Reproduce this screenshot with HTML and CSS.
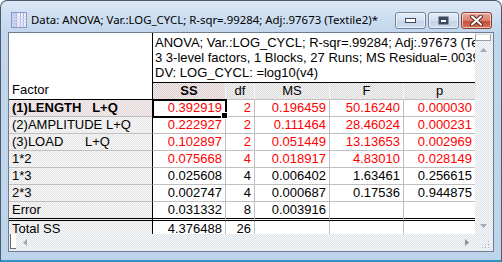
FILE: index.html
```html
<!DOCTYPE html>
<html lang="en">
<head>
    <meta charset="UTF-8">
    <title>Data: ANOVA</title>
    <link rel="stylesheet" href="styles.css">
</head>
<body>
    <div class="window">
        <!-- Title bar -->
        <div class="titlebar">
            <svg class="app-icon" width="16" height="16" viewBox="0 0 16 16">
                <rect x="0.5" y="0.5" width="15" height="15" fill="#eef1fb" stroke="#8e98c6"/>
                <rect x="1" y="1" width="4" height="14" fill="#c3cbec"/>
                <path d="M5.5 1v14M9.5 1v14M12.5 1v14" stroke="#a9b2dc"/>
                <path d="M1 4.5h14M1 7.5h14M1 10.5h14M1 13.5h14" stroke="#d2d7ef"/>
            </svg>
            <span class="title">Data: ANOVA; Var.:LOG_CYCL; R-sqr=.99284; Adj:.97673 (Textile2)*</span>
            <div class="caption-buttons">
                <button class="cap-btn">
                    <svg width="11" height="5" viewBox="0 0 11 5"><rect x="0.5" y="0.5" width="10" height="4" fill="#fff" stroke="#3b4a5e"/></svg>
                </button>
                <button class="cap-btn">
                    <svg width="11" height="9" viewBox="0 0 11 9"><rect x="0.5" y="0.5" width="10" height="8" fill="#3b4a5e"/><rect x="2.5" y="3.5" width="6" height="3" fill="#fff" stroke="#3b4a5e"/></svg>
                </button>
                <button class="cap-btn close">
                    <svg width="13" height="11" viewBox="0 0 13 11"><path d="M2 1.5l9 8M11 1.5l-9 8" stroke="#5a2a22" stroke-width="4" stroke-linecap="round"/><path d="M2 1.5l9 8M11 1.5l-9 8" stroke="#fff" stroke-width="2" stroke-linecap="round"/></svg>
                </button>
            </div>
        </div>

        <!-- Spreadsheet client area -->
        <div class="client">
            <div class="sheet-wrap">
                <table class="sheet">
                    <colgroup>
                        <col class="c-factor">
                        <col class="c-ss">
                        <col class="c-df">
                        <col class="c-ms">
                        <col class="c-f">
                        <col class="c-p">
                    </colgroup>
                    <tr class="note-row">
                        <td class="corner" rowspan="2">Factor</td>
                        <td class="note" colspan="5"><div>ANOVA; Var.:LOG_CYCL; R-sqr=.99284; Adj:.97673 (Textile2)</div><div>3 3-level factors, 1 Blocks, 27 Runs; MS Residual=.003916</div><div>DV: LOG_CYCL: =log10(v4)</div></td>
                    </tr>
                    <tr class="head-row">
                        <th class="sel">SS</th>
                        <th>df</th>
                        <th>MS</th>
                        <th>F</th>
                        <th>p</th>
                    </tr>
                    <tr class="hl">
                        <th class="rh sel">(1)LENGTH   L+Q</th>
                        <td class="active">0.392919</td><td>2</td><td>0.196459</td><td>50.16240</td><td>0.000030</td>
                    </tr>
                    <tr class="hl">
                        <th class="rh">(2)AMPLITUDE L+Q</th>
                        <td>0.222927</td><td>2</td><td>0.111464</td><td>28.46024</td><td>0.000231</td>
                    </tr>
                    <tr class="hl">
                        <th class="rh">(3)LOAD      L+Q</th>
                        <td>0.102897</td><td>2</td><td>0.051449</td><td>13.13653</td><td>0.002969</td>
                    </tr>
                    <tr class="hl">
                        <th class="rh">1*2</th>
                        <td>0.075668</td><td>4</td><td>0.018917</td><td>4.83010</td><td>0.028149</td>
                    </tr>
                    <tr>
                        <th class="rh">1*3</th>
                        <td>0.025608</td><td>4</td><td>0.006402</td><td>1.63461</td><td>0.256615</td>
                    </tr>
                    <tr>
                        <th class="rh">2*3</th>
                        <td>0.002747</td><td>4</td><td>0.000687</td><td>0.17536</td><td>0.944875</td>
                    </tr>
                    <tr class="error-row">
                        <th class="rh">Error</th>
                        <td>0.031332</td><td>8</td><td>0.003916</td><td></td><td></td>
                    </tr>
                    <tr>
                        <th class="rh">Total SS</th>
                        <td>4.376488</td><td>26</td><td></td><td></td><td></td>
                    </tr>
                </table>
            </div>

            <div class="vscroll">
                <div class="split-v"></div>
                <div class="arrow-btn">
                    <svg width="7" height="4" viewBox="0 0 7 4"><path d="M3.5 0L7 4H0z" fill="#a3a9b1"/></svg>
                </div>
                <div class="track"></div>
                <div class="arrow-btn">
                    <svg width="7" height="4" viewBox="0 0 7 4"><path d="M0 0h7L3.5 4z" fill="#a3a9b1"/></svg>
                </div>
            </div>

            <div class="hscroll">
                <div class="split-h"></div>
                <div class="arrow-btn">
                    <svg width="4" height="7" viewBox="0 0 4 7"><path d="M4 0v7L0 3.5z" fill="#a3a9b1"/></svg>
                </div>
                <div class="track"></div>
                <div class="arrow-btn">
                    <svg width="4" height="7" viewBox="0 0 4 7"><path d="M0 0l4 3.5L0 7z" fill="#8d939b"/></svg>
                </div>
            </div>

            <div class="grip">
                <svg width="8" height="8" viewBox="0 0 8 8">
                    <rect x="6" y="0" width="1" height="1" fill="#a0a6ae"/>
                    <rect x="3" y="3" width="1" height="1" fill="#a0a6ae"/>
                    <rect x="6" y="3" width="1" height="1" fill="#a0a6ae"/>
                    <rect x="0" y="6" width="1" height="1" fill="#a0a6ae"/>
                    <rect x="3" y="6" width="1" height="1" fill="#a0a6ae"/>
                    <rect x="6" y="6" width="1" height="1" fill="#a0a6ae"/>
                </svg>
            </div>
        </div>
    </div>
</body>
</html>
```

FILE: styles.css
```css
html, body {
    margin: 0;
    background: #fff;
}
.window {
    width: 502px;
    height: 262px;
    box-sizing: border-box;
    padding: 0 7px 8px 7px;
    border: 1px solid #4d5a6b;
    border-bottom: 2px solid #3592c0;
    border-radius: 7px 7px 0 0;
    background: linear-gradient(#dbe7f5, #c2d7ed 30px, #bed4ec);
    display: flex;
    flex-direction: column;
}
.titlebar {
    height: 31px;
    box-sizing: border-box;
    padding-top: 9px;
    display: flex;
    align-items: flex-start;
}
.app-icon {
    margin: 2px 4px 0 3px;
    flex: none;
}
.title {
    font-family: "Noto Sans", sans-serif;
    font-size: 11.4px;
    line-height: 19px;
    color: #000;
    white-space: nowrap;
    flex: 1;
}
.caption-buttons {
    display: flex;
    gap: 2px;
    margin-top: 2px;
    margin-right: 2px;
}
.cap-btn {
    width: 31px;
    height: 17px;
    padding: 0;
    border: 1px solid #72849b;
    border-radius: 3px;
    background: linear-gradient(#e3ecf7, #d3e0f0 50%, #c3d4e9 51%, #cfdcec);
    display: flex;
    align-items: center;
    justify-content: center;
    box-shadow: inset 0 0 0 1px rgba(255, 255, 255, 0.6);
}
.cap-btn.close {
    border-color: #8b3b2f;
    background: linear-gradient(#e9a898, #d9826f 50%, #c54d37 51%, #d2705a);
}

/* client area */
.client {
    width: 486px;
    height: 220px;
    box-sizing: border-box;
    border: 1px solid #6e7c8e;
    background: #fff;
    display: grid;
    grid-template-columns: 466px 18px;
    grid-template-rows: 201px 17px;
}
.sheet-wrap {
    overflow: hidden;
}
.sheet {
    border-collapse: separate;
    border-spacing: 0;
    table-layout: fixed;
    width: 467px;
    font-family: "Liberation Sans", Arial, sans-serif;
    font-size: 13px;
    color: #000;
}
.c-factor { width: 144px; }
.c-ss { width: 73px; }
.c-df { width: 29px; }
.c-ms { width: 75px; }
.c-f { width: 74px; }
.c-p { width: 72px; }

.sheet td, .sheet th {
    box-sizing: border-box;
    height: 17px;
    padding: 0 3px 0 3px;
    line-height: 16px;
    border-right: 1px solid #c0c0c0;
    border-bottom: 1px solid #c0c0c0;
    white-space: pre;
    overflow: hidden;
    font-weight: normal;
}
.sheet td {
    text-align: right;
}
.sheet th.rh {
    text-align: left;
    background: repeating-conic-gradient(#f7f7f7 0 25%, #e6e6e6 0 50%) 0 0 / 2px 2px;
    border-right-color: #000;
}
.sheet th.rh.sel {
    font-weight: bold;
    background: repeating-conic-gradient(#f7efef 0 25%, #e2d8d8 0 50%) 0 0 / 2px 2px;
}
.sheet .note-row td {
    height: 50px;
}
.sheet td.corner {
    vertical-align: bottom;
    text-align: left;
    border-right: 1px solid #000;
    border-bottom: 1px solid #000;
    padding-bottom: 1px;
}
.sheet td.note {
    text-align: left;
    vertical-align: top;
    white-space: nowrap;
    padding: 2px 0 0 2px;
    line-height: 15px;
    border-bottom: 1px solid #000;
    border-right: none;
}
.sheet .head-row th {
    text-align: center;
    background: repeating-conic-gradient(#f4f4f4 0 25%, #d9d9d9 0 50%) 0 0 / 2px 2px;
    border-right-color: #f4f4f4;
}
.sheet .head-row th.sel {
    font-weight: bold;
    background: repeating-conic-gradient(#f5ecec 0 25%, #d8cccc 0 50%) 0 0 / 2px 2px;
}
.hl td {
    color: #f00;
}
.sheet td.active {
    position: relative;
    overflow: visible;
    outline: 2px solid #000;
    outline-offset: -1px;
}
.sheet td.active::after {
    content: "";
    position: absolute;
    right: -3px;
    bottom: -3px;
    width: 5px;
    height: 5px;
    background: #000;
    border: 1px solid #fff;
    z-index: 2;
}
.sheet .error-row td, .sheet .error-row th {
    border-bottom: 3px double #000;
    height: 19px;
}

/* scroll bars */
.vscroll, .hscroll {
    display: flex;
    background: repeating-conic-gradient(#f5f7f9 0 25%, #dfe4ea 0 50%) 0 0 / 2px 2px;
}
.vscroll {
    flex-direction: column;
}
.track {
    flex: 1;
}
.arrow-btn {
    width: 17px;
    height: 17px;
    display: flex;
    align-items: center;
    justify-content: center;
    flex: none;
}
.split-v {
    height: 5px;
    margin: 1px 2px 0 0;
    background: #fff;
    border: 1px solid #9aa3ad;
    border-top-color: #e0e0e0;
}
.split-h {
    width: 5px;
    margin: 0 0 2px 1px;
    background: #fff;
    border-left: 1px solid #6b6b6b;
    border-bottom: 1px solid #6b6b6b;
}
.grip {
    background: repeating-conic-gradient(#f5f7f9 0 25%, #dfe4ea 0 50%) 0 0 / 2px 2px;
    display: flex;
    align-items: flex-end;
    justify-content: flex-end;
    padding: 0 3px 2px 0;
}
```
